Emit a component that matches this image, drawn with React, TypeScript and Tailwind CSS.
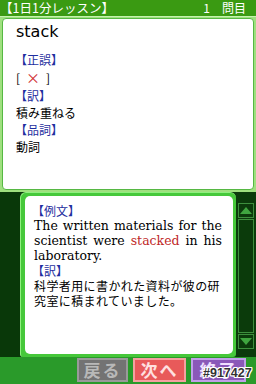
import React from "react";

const jp = { fontFamily: '"Noto Sans CJK JP", "DejaVu Sans", sans-serif' };
const serif = { fontFamily: '"DejaVu Serif", "Liberation Serif", "Noto Sans CJK JP", serif' };

export default function App() {
  return (
    <div className="relative w-[256px] h-[384px] overflow-hidden bg-[#9fe07f] flex flex-col" style={jp}>
      {/* header */}
      <div className="h-[16px] bg-[#3a9a12] flex items-center justify-between text-white text-[12.5px] pr-[10px]">
        <span className="leading-none">【1日1分レッスン】</span>
        <span className="text-[12px] leading-none">1　問目</span>
      </div>
      <div className="h-[1px] bg-[#c6f2b0]" />
      {/* top panel */}
      <div className="px-[2px] pt-[1px] pb-[2px] h-[175px]">
        <div className="h-full bg-white border border-[#56b843] rounded-[4px] px-[13px] pt-[2px] text-[12px] leading-[17px] text-black">
          <div className="text-[16px] leading-[22px] mb-[8px]" style={{ fontFamily: '"DejaVu Sans", sans-serif' }}>stack</div>
          <div className="text-[#1f2fa0] -ml-[1px]">【正誤】</div>
          <div className="flex items-center h-[19px]">
            <span>[</span>
            <span className="text-[#d03030] mx-[6px] text-[14px]">×</span>
            <span>]</span>
          </div>
          <div className="text-[#1f2fa0] -ml-[1px]">【訳】</div>
          <div>積み重ねる</div>
          <div className="text-[#1f2fa0] -ml-[1px]">【品詞】</div>
          <div>動詞</div>
        </div>
      </div>
      {/* bottom section */}
      <div className="flex h-[165px] bg-[#0b3b0b]">
        <div className="w-[20px] bg-[#093809]" />
        <div className="w-[216px] bg-[#46c83a] rounded-t-[6px] rounded-b-[3px] p-[3px] pl-[4px] border-t border-l border-[#8ef07e]">
          <div className="h-[158px] bg-white rounded-[5px] pl-[9px] pr-[11px] pt-[7px] text-[12px] leading-[15px] text-black">
            <div className="text-[#1f2fa0] -ml-[2px]">【例文】</div>
            <div style={serif} className="text-[12.5px] leading-[15px]">
              <div className="text-justify [text-align-last:justify]">The written materials for the</div>
              <div className="text-justify [text-align-last:justify]">
                scientist were <span className="text-[#c02828]">stacked</span> in his
              </div>
              <div>laboratory.</div>
            </div>
            <div className="text-[#1f2fa0] -ml-[2px]">【訳】</div>
            <div className="tracking-[0.4px]">科学者用に書かれた資料が彼の研</div>
            <div className="tracking-[0.4px]">究室に積まれていました。</div>
          </div>
        </div>
        {/* scrollbar */}
        <div className="w-[20px] bg-[#0b3b0b] flex flex-col items-center pt-[11px] gap-[1px]">
          <div className="w-[16px] h-[15px] border border-[#3d8f3d] flex items-center justify-center">
            <svg width="12" height="7" viewBox="0 0 12 7">
              <polygon points="6,0 12,7 0,7" fill="#3fa63f" />
            </svg>
          </div>
          <div className="w-[16px] h-[114px] border border-[#3d8f3d]" />
          <div className="w-[16px] h-[15px] border border-[#3d8f3d] flex items-center justify-center">
            <svg width="12" height="7" viewBox="0 0 12 7">
              <polygon points="0,0 12,0 6,7" fill="#3fa63f" />
            </svg>
          </div>
        </div>
      </div>
      {/* bottom bar */}
      <div className="flex-1 bg-[#2a9a2a] flex items-start pt-[1px] pl-[77px] gap-[5px]">
        <div className="w-[51px] h-[24px] bg-[#737373] border-2 border-[#9a9a9a] flex items-center justify-center text-[#b8b8b8] text-[17px] font-bold tracking-[2px]">
          戻る
        </div>
        <div className="w-[53px] h-[24px] bg-[#e85a5a] border-2 border-[#f5a0a0] flex items-center justify-center text-[#ffe0e0] text-[17px] font-bold tracking-[2px]">
          次へ
        </div>
        <div className="w-[55px] h-[24px] bg-[#8a58b8] border-2 border-[#c0a0e8] flex items-center justify-center text-[#f0e0ff] text-[17px] font-bold tracking-[2px]">
          終了
        </div>
      </div>
      <div
        className="absolute left-[203px] top-[367px] text-[12.5px] font-bold leading-none text-[#333]"
        style={{
          fontFamily: '"Liberation Sans", Arial, sans-serif',
          textShadow:
            "1px 0 0 #fff, -1px 0 0 #fff, 0 1px 0 #fff, 0 -1px 0 #fff, 1px 1px 0 #fff, -1px -1px 0 #fff, 1px -1px 0 #fff, -1px 1px 0 #fff",
        }}
      >
        #917427
      </div>
    </div>
  );
}
